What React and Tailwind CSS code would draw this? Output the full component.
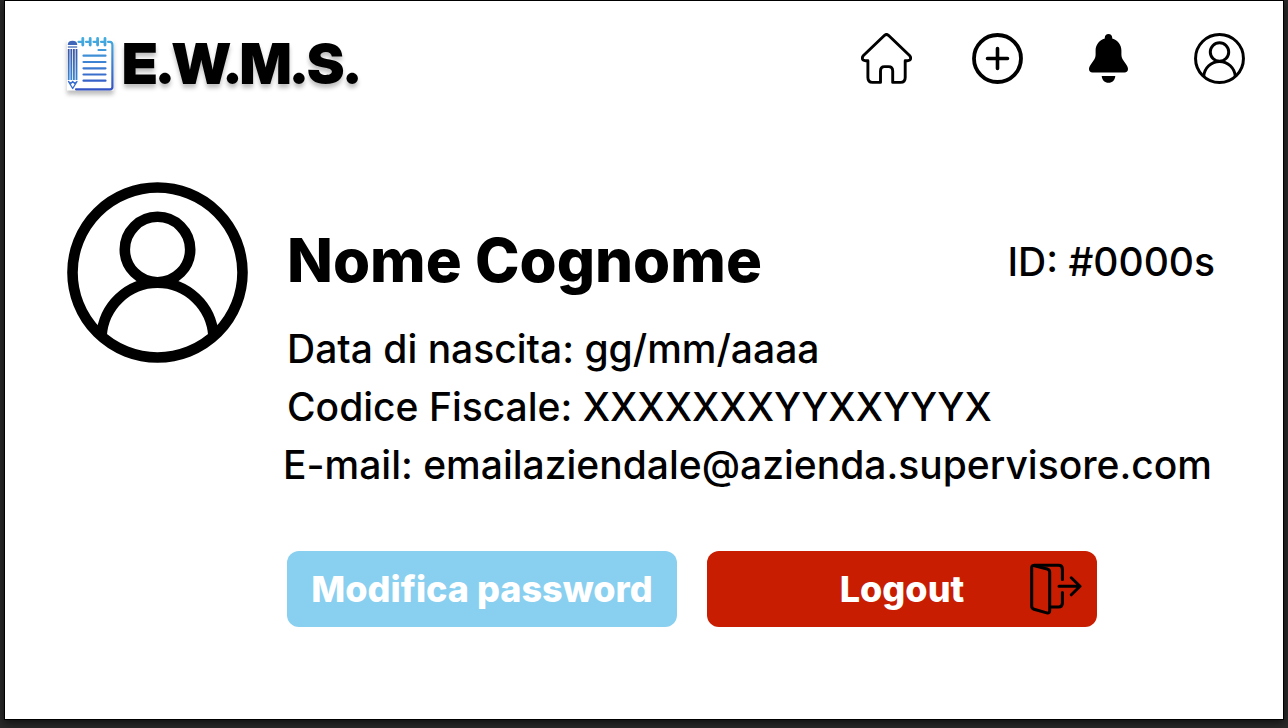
import React from "react";

function LogoIcon() {
  return (
    <svg viewBox="0 0 48 56" className="h-14 w-12 shrink-0 drop-shadow-[0_4px_2px_rgba(0,0,0,0.25)]" aria-hidden="true">
      <defs>
        <linearGradient id="ink" gradientUnits="userSpaceOnUse" x1="0" y1="2" x2="0" y2="54">
          <stop offset="0" stopColor="#45aee0" />
          <stop offset="1" stopColor="#3452c4" />
        </linearGradient>
        <linearGradient id="lead" gradientUnits="userSpaceOnUse" x1="0" y1="12" x2="0" y2="54">
          <stop offset="0" stopColor="#3c55a5" />
          <stop offset="1" stopColor="#3a94e0" />
        </linearGradient>
      </defs>
      <rect x="1" y="3" width="46.500" height="51.500" fill="#fff" />
      <g fill="none" stroke="url(#ink)" strokeWidth="2.200" strokeLinecap="round" strokeLinejoin="round">
        <path d="M10 53.300H44Q46.400 53.300 46.400 51V9Q46.400 6 44 5.800H42" />
        <path d="M12.500 5.800H17M20 5.800H24M27.500 5.800H31.500M35 5.800H39" />
        <path d="M16.800 2.500V9M24.200 2.500V9M31.600 2.500V9M39 2.500V9" strokeWidth="2.800" />
        <path d="M32.500 14.010H39.500M17.500 19.700H39.500M17.500 26H39.500M17.500 32.300H39.500M17.500 38.500H39.500M17.500 44.700H39.500" />
      </g>
      <path d="M1.800 9V8Q2.500 4.800 6.500 4.800T11.200 8V9Z" fill="#3f66b8" />
      <path d="M1.800 11H11.200" stroke="#4f74bc" strokeWidth="1.400" />
      <path d="M2.700 13V44M5.300 13V44M7.900 13V44M10.500 13V44" stroke="url(#lead)" strokeWidth="1.800" />
      <path d="M2.500 45.500L6.700 52.500L11 45.500L8.700 47.500L6.700 45.500L4.800 47.500Z" fill="none" stroke="#3a6fd0" strokeWidth="1.400" strokeLinejoin="round" />
    </svg>
  );
}

function HomeIcon() {
  return (
    <svg viewBox="0 0 51 51" className="size-[51px]" fill="none" stroke="currentColor" strokeWidth="2.9" strokeLinecap="round" strokeLinejoin="round" aria-hidden="true">
      <path d="M23.600 2.300Q25.500 .6 27.400 2.300L48.800 22.800Q50.300 24.800 49.200 26.600Q48.300 27.800 44.200 27.800V44.500Q44.200 49.400 39.500 49.400H31.700V38Q31.700 33.600 27.500 33.600H23.500Q19.500 33.600 19.500 38V49.400H11.500Q6.900 49.400 6.900 44.500V27.800Q2.700 27.800 1.800 26.600Q.7 24.800 2.200 22.800Z" />
    </svg>
  );
}

function AddIcon() {
  return (
    <svg viewBox="0 0 51 51" className="size-[51px]" fill="none" stroke="currentColor" strokeLinecap="round" aria-hidden="true">
      <circle cx="25.500" cy="25.500" r="23.500" strokeWidth="3.800" />
      <path d="M25.500 15.500V35.500M15.500 25.500H35.500" strokeWidth="3.600" />
    </svg>
  );
}

function BellIcon() {
  return (
    <svg viewBox="0 0 51 51" className="size-[51px]" fill="currentColor" aria-hidden="true">
      <path d="M25.500 1C23.300 1 21.800 2.500 21.800 4.600V5.500C16.200 7.300 12.600 11.800 12.600 17.500V22C12.600 25 11 27 9 29.800C7.300 32.300 6 33.800 6 36C6 38.300 7.300 39.400 9.500 39.400H41.500C43.700 39.400 45 38.300 45 36C45 33.800 43.700 32.300 42 29.800C40 27 38.400 25 38.400 22V17.500C38.400 11.800 34.800 7.300 29.200 5.500V4.600C29.200 2.500 27.700 1 25.500 1Z" />
      <path d="M18.700 43H32.300C32 47 29.300 49.800 25.500 49.800S19 47 18.700 43Z" />
    </svg>
  );
}

function UserIcon({ className }) {
  return (
    <svg viewBox="0 0 181 181" className={className} fill="none" stroke="currentColor" strokeWidth="10.600" aria-hidden="true">
      <circle cx="90.500" cy="90.500" r="85" />
      <circle cx="90.500" cy="67.500" r="32.700" />
      <path d="M34.500 154C36.500 124 61 100.800 90.500 100.800S144.500 124 146.500 154" />
    </svg>
  );
}

function ExitIcon() {
  return (
    <svg viewBox="0 0 52 52" className="size-[52px]" fill="none" stroke="currentColor" strokeWidth="3" strokeLinecap="round" strokeLinejoin="round" aria-hidden="true">
      <path d="M1.700 4.500Q1.700 2 4.500 2.700L17.300 6Q19.700 6.700 19.700 9.200V47.500Q19.700 50.700 16.800 49.900L4 46.200Q1.700 45.500 1.700 43Z" />
      <path d="M4 2.300H28.500Q32.400 2.300 32.400 6.200V16.500M32.400 29.500V40Q32.400 44 28.500 44H20.500" />
      <path d="M29 23.300H50M41.300 14.800L50 23.300L41.300 31.800" />
    </svg>
  );
}

export default function App() {
  return (
    <div className="flex min-h-screen flex-col bg-[#2a2a2a] px-1 pb-2 font-['Inter',sans-serif] text-black">
      <div className="flex grow flex-col border border-black bg-white pt-8 pr-[38px] pl-[61px] shadow-[0_3px_8px_rgba(0,0,0,0.6)]">
        <header className="flex items-start justify-between">
          <a href="#" className="flex items-center gap-2 pt-px">
            <LogoIcon />
            <span className="font-['Inter_Display','Inter',sans-serif] text-[56px] leading-[60px] font-black [text-shadow:0_4px_4px_rgba(0,0,0,0.25)]">E.W.M.S.</span>
          </a>
          <nav className="flex gap-[60px]">
            <a href="#" aria-label="Home"><HomeIcon /></a>
            <a href="#" aria-label="Aggiungi"><AddIcon /></a>
            <a href="#" aria-label="Notifiche"><BellIcon /></a>
            <a href="#" aria-label="Profilo"><UserIcon className="size-[51px]" /></a>
          </nav>
        </header>

        <main className="mt-[88px] flex items-start gap-[35px] pl-px">
          <UserIcon className="size-[181px] shrink-0" />
          <div className="min-w-0 grow pt-[38px]">
            <div className="flex items-center justify-between pr-[30px] pl-1">
              <h1 className="text-[60px] leading-[80px] font-extrabold">Nome Cognome</h1>
              <p className="pt-1 text-[39px] leading-[58px] font-medium">ID: #0000s</p>
            </div>
            <div className="mt-5 text-[39px] leading-[58px] font-medium whitespace-nowrap">
              <p className="pl-1">Data di nascita: gg/mm/aaaa</p>
              <p className="pl-1">Codice Fiscale: XXXXXXXYYXXYYYX</p>
              <p>E-mail: emailaziendale@azienda.supervisore.com</p>
            </div>
            <div className="mt-[57px] flex gap-[30px] pl-1 text-[36px] font-extrabold text-white">
              <button type="button" className="h-[76px] w-[390px] rounded-xl bg-[#89cff0]">Modifica password</button>
              <button type="button" className="relative h-[76px] w-[390px] rounded-xl bg-[#c81d00]">
                Logout
                <span className="absolute top-3 right-[15px] text-black"><ExitIcon /></span>
              </button>
            </div>
          </div>
        </main>
      </div>
    </div>
  );
}
